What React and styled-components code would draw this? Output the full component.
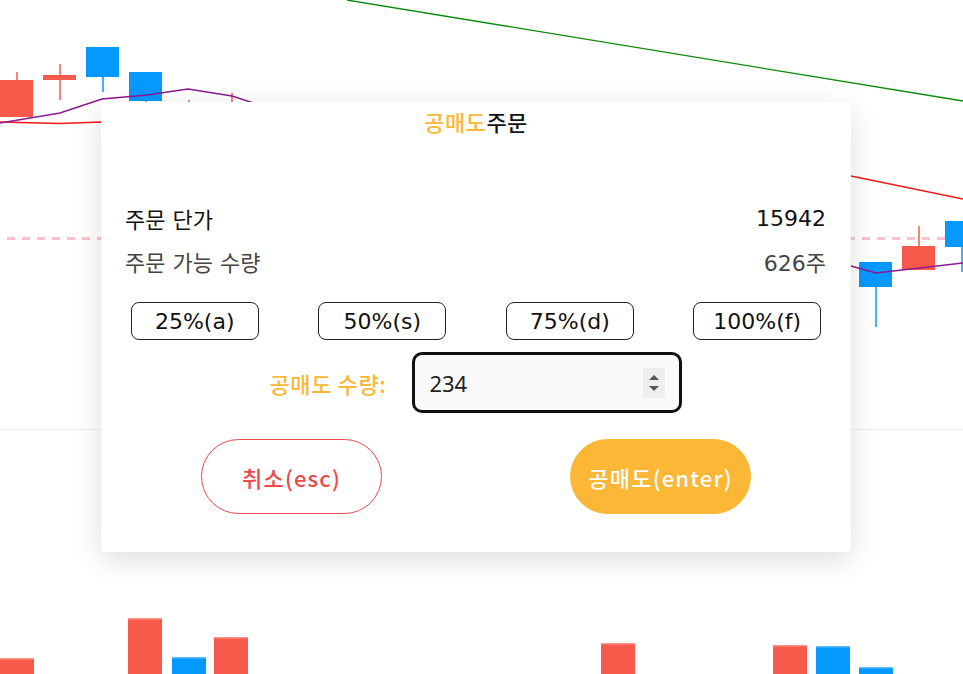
import React from 'react';
import styled, { createGlobalStyle } from 'styled-components';

const GlobalStyle = createGlobalStyle`
  html, body {
    margin: 0;
    padding: 0;
    background: #fff;
  }
  body {
    font-family: "DejaVu Sans", "Noto Sans CJK KR", sans-serif;
  }
  * {
    box-sizing: border-box;
  }
`;

const ORANGE = '#fbb735';
const RED = '#f7594a';
const BLUE = '#0598ff';

const Stage = styled.div`
  position: relative;
  width: 963px;
  height: 674px;
  overflow: hidden;
`;

const Chart = styled.svg`
  display: block;
`;

const Modal = styled.div`
  position: absolute;
  left: 101px;
  top: 102px;
  width: 750px;
  height: 450px;
  background: #fff;
  border-radius: 4px;
  box-shadow: 0 8px 28px rgba(0, 0, 0, 0.13);
  display: flex;
  flex-direction: column;
`;

const Title = styled.h2`
  margin: 0;
  height: 38px;
  line-height: 38px;
  text-align: center;
  font-family: "Noto Sans CJK KR", sans-serif;
  font-size: 22px;
  font-weight: 500;
  letter-spacing: 0.5px;
  color: #111;
  span {
    color: ${ORANGE};
  }
`;

const InfoList = styled.div`
  margin-top: 61px;
  padding: 0 25px 0 24px;
  display: flex;
  flex-direction: column;
  gap: 9px;
`;

const InfoRow = styled.div`
  display: flex;
  justify-content: space-between;
  align-items: center;
  height: 34px;
  font-size: 22px;
  color: ${p => (p.$muted ? '#444' : '#111')};
`;

const PercentRow = styled.div`
  margin-top: 24px;
  display: flex;
  justify-content: space-around;
`;

const PercentButton = styled.button`
  width: 128px;
  height: 38px;
  border: 1px solid #222;
  border-radius: 8px;
  background: #fff;
  font-family: inherit;
  font-size: 22px;
  color: #111;
  padding: 0;
  cursor: pointer;
`;

const QtyRow = styled.div`
  margin-top: 12px;
  display: flex;
  justify-content: center;
  align-items: center;
  gap: 26px;
`;

const QtyLabel = styled.label`
  font-family: "Noto Sans CJK KR", sans-serif;
  font-size: 22px;
  font-weight: 500;
  letter-spacing: 0.6px;
  color: ${ORANGE};
`;

const InputBox = styled.div`
  width: 270px;
  height: 61px;
  border: 3px solid #111;
  border-radius: 10px;
  background: #fafafa;
  display: flex;
  align-items: center;
  padding: 0 14px;
`;

const QtyInput = styled.input`
  flex: 1;
  min-width: 0;
  border: none;
  outline: none;
  background: transparent;
  font-family: "Noto Sans", sans-serif;
  font-size: 22px;
  color: #222;
  padding: 0;
`;

const Spinner = styled.div`
  width: 22px;
  height: 30px;
  background: #eeeeee;
  display: flex;
  flex-direction: column;
  align-items: center;
  justify-content: center;
  gap: 6px;
`;

const Arrow = styled.span`
  width: 0;
  height: 0;
  border-left: 5px solid transparent;
  border-right: 5px solid transparent;
  ${p => (p.$down ? `border-top: 5px solid #555;` : `border-bottom: 5px solid #555;`)}
`;

const ActionRow = styled.div`
  margin-top: 26px;
  display: flex;
  justify-content: center;
  gap: 188px;
`;

const ActionButton = styled.button`
  width: 181px;
  height: 75px;
  border-radius: 38px;
  font-family: "Noto Sans CJK KR", sans-serif;
  font-size: 22px;
  font-weight: 500;
  letter-spacing: 1.2px;
  padding: 0;
  cursor: pointer;
  border: 1px solid ${p => (p.$primary ? ORANGE : '#ef4848')};
  background: ${p => (p.$primary ? ORANGE : '#fff')};
  color: ${p => (p.$primary ? '#fff' : '#ef4848')};
`;

const candles = [
  { x: 0, top: 80, bottom: 117, wickTop: 72, wickBottom: 117, color: RED },
  { x: 43, top: 75, bottom: 80, wickTop: 64, wickBottom: 100, color: RED },
  { x: 86, top: 47, bottom: 77, wickTop: 47, wickBottom: 92, color: BLUE },
  { x: 129, top: 72, bottom: 101, wickTop: 72, wickBottom: 104, color: BLUE },
  { x: 172, top: 104, bottom: 110, wickTop: 100, wickBottom: 110, color: RED },
  { x: 215, top: 104, bottom: 110, wickTop: 93, wickBottom: 110, color: RED },
  { x: 859, top: 262, bottom: 287, wickTop: 262, wickBottom: 327, color: BLUE },
  { x: 902, top: 246, bottom: 270, wickTop: 226, wickBottom: 270, color: RED },
  { x: 945, top: 221, bottom: 247, wickTop: 221, wickBottom: 272, color: BLUE },
];

const volumes = [
  { x: 0, top: 658, color: RED },
  { x: 128, top: 618, color: RED },
  { x: 172, top: 657, color: BLUE },
  { x: 214, top: 637, color: RED },
  { x: 601, top: 643, color: RED },
  { x: 773, top: 645, color: RED },
  { x: 816, top: 646, color: BLUE },
  { x: 859, top: 667, color: BLUE },
];

const purple = '0,123 60,113 102,99 147,95 188,89 232,96 300,118 851,266 876,273 963,263';

const ChartBackdrop = () => (
  <Chart width="963" height="674" viewBox="0 0 963 674">
    <line x1="0" y1="238.5" x2="963" y2="238.5" stroke="#fbc2c8" strokeWidth="3" strokeDasharray="8 7" strokeDashoffset="-7" />
    <line x1="0" y1="429.5" x2="963" y2="429.5" stroke="#ececec" strokeWidth="1" />
    <line x1="347" y1="0" x2="963" y2="101" stroke="#0a8a0a" strokeWidth="1.3" />
    <polyline points="0,122 60,123.5 101,122 851,176 963,199" fill="none" stroke="#f21818" strokeWidth="1.3" />
    {candles.map((c, i) => (
      <g key={i}>
        <line x1={c.x + 17} y1={c.wickTop} x2={c.x + 17} y2={c.wickBottom} stroke={c.color} strokeWidth="1.5" />
        <rect x={c.x} y={c.top} width="33" height={c.bottom - c.top} fill={c.color} />
      </g>
    ))}
    <polyline points={purple} fill="none" stroke="#8a1a8f" strokeWidth="1.5" />
    {volumes.map((v, i) => (
      <g key={i}>
        <rect x={v.x} y={v.top} width="34" height={674 - v.top} fill={v.color} />
        <rect x={v.x} y={v.top} width="34" height="1.5" fill="#fff" opacity="0.35" />
      </g>
    ))}
  </Chart>
);

const percents = ['25%(a)', '50%(s)', '75%(d)', '100%(f)'];

export default function App() {
  return (
    <>
      <GlobalStyle />
      <Stage>
        <ChartBackdrop />
        <Modal>
          <Title>
            <span>공매도</span>주문
          </Title>
          <InfoList>
            <InfoRow>
              <span>주문 단가</span>
              <span>15942</span>
            </InfoRow>
            <InfoRow $muted>
              <span>주문 가능 수량</span>
              <span>626주</span>
            </InfoRow>
          </InfoList>
          <PercentRow>
            {percents.map(p => (
              <PercentButton key={p}>{p}</PercentButton>
            ))}
          </PercentRow>
          <QtyRow>
            <QtyLabel htmlFor="qty">공매도 수량:</QtyLabel>
            <InputBox>
              <QtyInput id="qty" type="text" defaultValue="234" />
              <Spinner>
                <Arrow />
                <Arrow $down />
              </Spinner>
            </InputBox>
          </QtyRow>
          <ActionRow>
            <ActionButton>취소(esc)</ActionButton>
            <ActionButton $primary>공매도(enter)</ActionButton>
          </ActionRow>
        </Modal>
      </Stage>
    </>
  );
}
